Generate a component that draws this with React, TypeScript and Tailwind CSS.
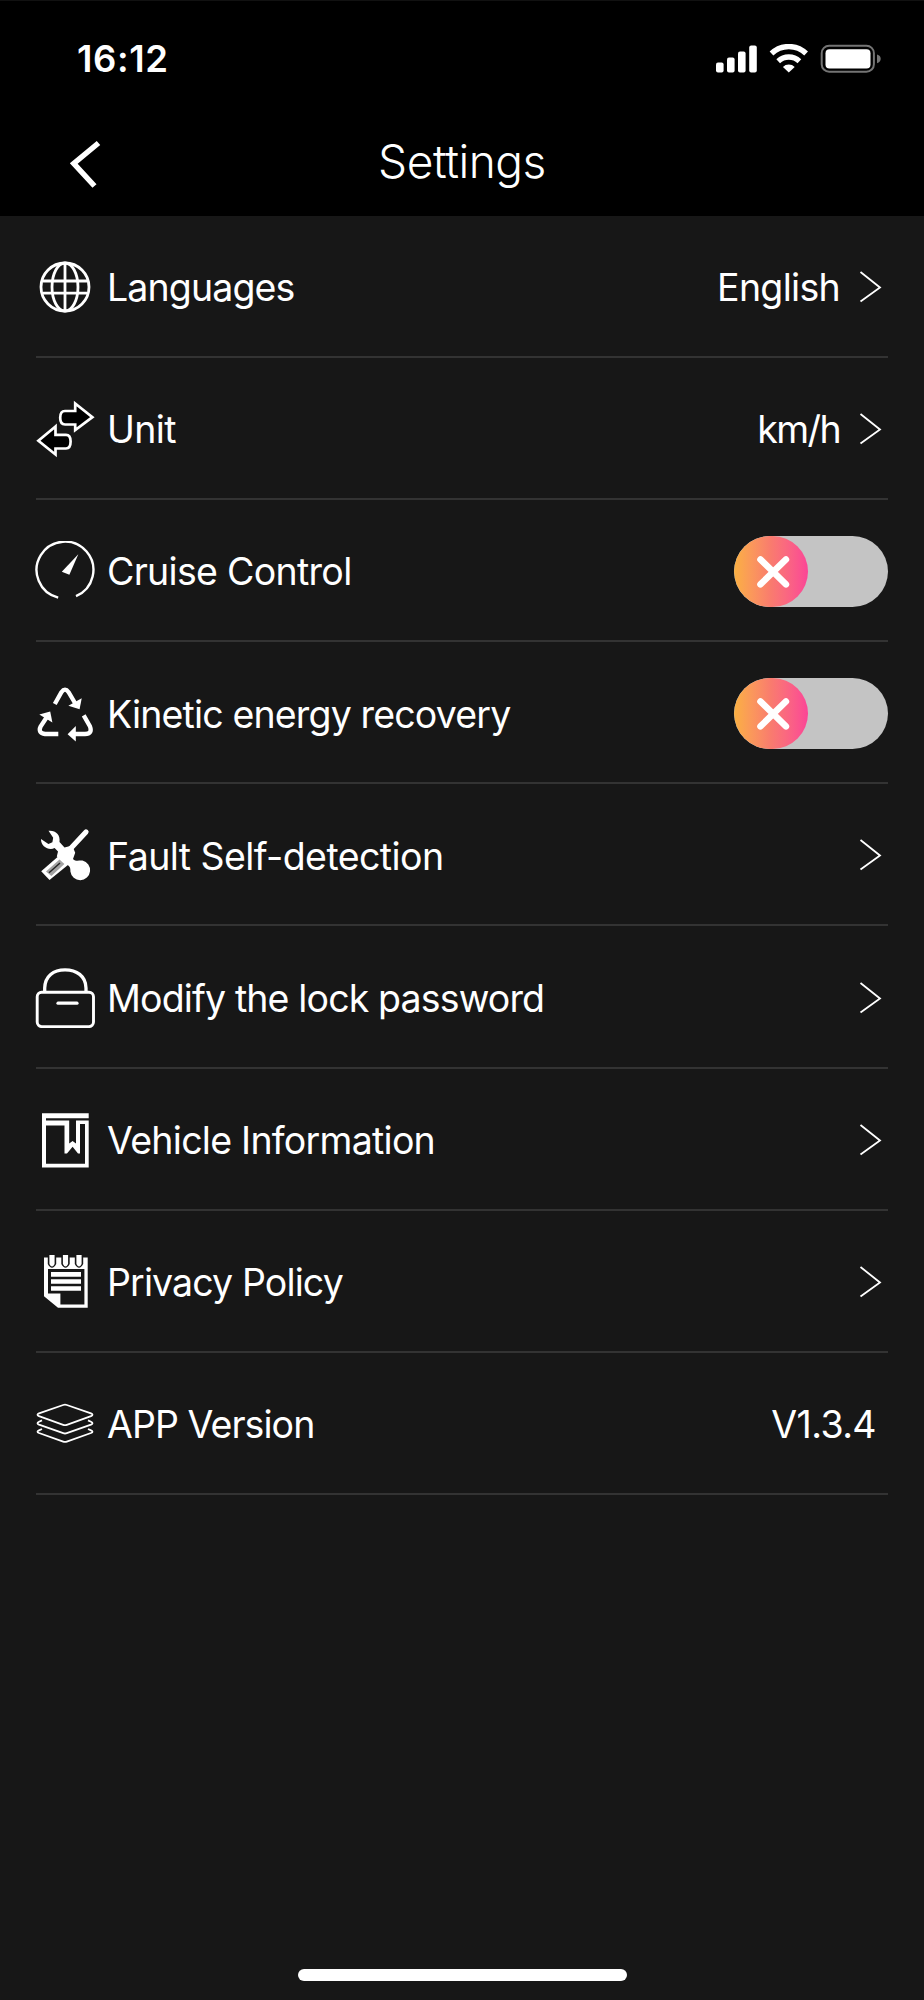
import { useState } from "react";
import type { ReactNode } from "react";

const GlobeIcon = () => (
  <svg viewBox="0 0 60 60" className="w-[60px] h-[60px]" fill="none" stroke="white" strokeWidth="2.8">
    <circle cx="30" cy="30" r="24" />
    <ellipse cx="30" cy="30" rx="13" ry="24" />
    <path d="M30 6v48M8 24h44M8 36.2h44" />
  </svg>
);

const UnitIcon = () => (
  <svg viewBox="0 0 60 60" className="w-[60px] h-[60px]" fill="black" stroke="white" strokeWidth="2.7">
    <path d="M40.2 4.5L57.4 18.2L40.2 31V25.5H30Q25.2 25.5 25.2 18.8Q25.2 12 30 12H40.2Z" />
    <path d="M20.5 27.5L3.4 41.8L20.5 55.5V49.5H31Q35.6 49.5 35.6 42.5Q35.6 35.8 31 35.8H20.5Z" />
  </svg>
);

const GaugeIcon = () => (
  <svg viewBox="0 0 60 60" className="w-[60px] h-[60px]">
    <path d="M23.2 56.6A28.4 28.4 0 1 1 41 55.2" fill="none" stroke="white" strokeWidth="2.4" />
    <path d="M43.3 13.2L34.4 33.8L26.8 30.7Z" fill="white" />
  </svg>
);

const RecycleIcon = () => (
  <svg viewBox="0 0 60 60" className="w-[60px] h-[60px]" fill="white">
    <g fill="none" stroke="white" strokeWidth="4.3">
      <path d="M19.8 21L26.4 9.2Q30 4.2 33.6 9.2L40 20" />
      <path d="M48.7 32.4L55 43.5Q57.8 50.8 50 51H40" />
      <path d="M23.3 51H10Q2.6 50 5.6 43.5L12.5 33" />
    </g>
    <path d="M46.7 15.3L44.6 26.2L33.4 22.8Z" />
    <path d="M40.8 43V58.5L32.6 51.2Z" />
    <path d="M4.3 31.4L15.2 28.6L17.4 39.4Z" />
  </svg>
);

const ToolsIcon = () => (
  <svg viewBox="0 0 60 60" className="w-[60px] h-[60px]">
    <path d="M51 7L31 28.5" stroke="white" strokeWidth="5.2" strokeLinecap="round" />
    <path d="M26 29L36 37.5L14.5 55L6.2 46.2Z" fill="white" />
    <path d="M24.5 34.4L29.4 39L16.4 51L11 46.4Z" fill="#a3a3a3" />
    <path d="M25 38L14 47.8" stroke="#262626" strokeWidth="1.5" />
    <path
      d="M13.5 5.8C20 5 25.6 9 24.5 17L29.5 22.4L37.2 20.6L40.2 27.8L38 34C41 37 44 35.2 47.5 35.6A9.9 9.9 0 1 1 35.4 46.5C35.6 42.4 34.6 41 31.2 39L21.8 31.6L23 26.6L19.6 23C14 26 5.6 21.5 6 14L13.4 19L17.4 17.2L18.2 12.8Z"
      fill="white"
    />
  </svg>
);

const LockIcon = () => (
  <svg viewBox="0 0 60 60" className="w-[60px] h-[60px]" fill="none" stroke="white">
    <path d="M9.7 23.5V20C10 8 18.5 1.8 30 1.8S50.8 8 51 20V23.5" strokeWidth="3.3" />
    <rect x="2.2" y="24.2" width="56.3" height="34.4" rx="4.5" strokeWidth="2.9" />
    <path d="M23 35.2H42" strokeWidth="3.2" strokeLinecap="round" />
  </svg>
);

const BookIcon = () => (
  <svg viewBox="0 0 60 60" className="w-[60px] h-[60px]" fill="white">
    <path d="M7 3.2H53.7V8.2H11V10.4H34.2V33.6L37.6 31L41 33.6V10.4H53.7V57.6H7ZM11 15.4V53.7H50V14H45V43.4H43L37.6 36.8L32 43.4H29.5V15.4Z" fillRule="evenodd" />
  </svg>
);

const NotepadIcon = () => (
  <svg viewBox="0 0 60 60" className="w-[60px] h-[60px]" fill="white">
    <path d="M9 5.4H52.7V55.8H23L9 44.2ZM13 17V41.4H25.4V52.6H49.4V17Z" fillRule="evenodd" />
    {[17, 30.5, 44].map((x) => (
      <g key={x}>
        <path d={`M${x - 4.2} 4.8V12Q${x} 19.5 ${x + 4.2} 12V4.8Z`} fill="#171717" />
        <path d={`M${x - 2.6} 3H${x + 2.6}V12Q${x} 17 ${x - 2.6} 12Z`} />
      </g>
    ))}
    <path d="M16 20H46V24.8H16ZM16 27.2H46V31.8H16ZM16 34.2H46V38.8H16Z" />
  </svg>
);

const LayersIcon = () => (
  <svg viewBox="0 0 60 60" className="w-[60px] h-[60px]" fill="none" stroke="white" strokeWidth="1.8" strokeLinejoin="round">
    <path d="M28.2 11Q30 10.4 31.8 11L56 19.4Q59 20.8 56 22.2L31.8 30.8Q30 31.4 28.2 30.8L4 22.2Q1 20.8 4 19.4Z" />
    <path d="M7 26.4L4 27.8Q1 29.2 4 30.6L28.2 39.2Q30 39.8 31.8 39.2L56 30.6Q59 29.2 56 27.8L53 26.4" />
    <path d="M7 35L4 36.4Q1 37.8 4 39L28.2 47.6Q30 48.2 31.8 47.6L56 39Q59 37.8 56 36.4L53 35" />
  </svg>
);

const StatusIcons = () => (
  <div className="flex items-center">
    <svg viewBox="0 0 42 30" className="w-[42px] h-[30px]" fill="white">
      <rect x="0" y="18.5" width="7.6" height="10" rx="2" />
      <rect x="11" y="13.5" width="7.6" height="15" rx="2" />
      <rect x="22" y="7.5" width="7.6" height="21" rx="2" />
      <rect x="33.2" y="1.5" width="7.6" height="27" rx="2" />
    </svg>
    <svg viewBox="0 0 40 30" className="ml-[11px] w-10 h-[30px]" fill="none" stroke="white" strokeWidth="5.4">
      <path d="M2.5 9.5A25 25 0 0 1 37.1 9.5" />
      <path d="M9.2 17.2A15.5 15.5 0 0 1 30.4 17.2" />
      <path d="M19.8 28.5L13.9 22.9A8.3 8.3 0 0 1 25.7 22.9Z" fill="white" stroke="none" />
    </svg>
    <svg viewBox="0 0 62 30" className="ml-[11px] w-[62px] h-[30px]">
      <rect x="1.7" y="1.7" width="52.2" height="26" rx="7.5" fill="none" stroke="#747474" strokeWidth="2" />
      <rect x="5.5" y="5.3" width="45" height="19.2" rx="4" fill="white" />
      <path d="M57 10.5Q60.7 11.5 60.7 14.8T57 19.2Z" fill="#747474" />
    </svg>
  </div>
);

const Chevron = () => (
  <svg viewBox="0 0 24 34" className="w-6 h-[34px]" fill="none" stroke="white" strokeWidth="1.8">
    <path d="M2.5 2L22 17.5L2.5 31.5" />
  </svg>
);

const Toggle = ({ label }: { label: string }) => {
  const [on, setOn] = useState(false);

  return (
    <button
      type="button"
      role="switch"
      aria-label={label}
      aria-checked={on}
      onClick={() => setOn(!on)}
      className={`flex h-[71px] w-[154px] overflow-hidden rounded-full bg-[#c4c4c4] ${on ? "justify-end" : "justify-start"}`}
    >
      <span className="flex h-[71px] w-[74px] items-center justify-center rounded-full bg-linear-to-r from-[#fbb040] via-[#f97b6e] to-[#fb4496]">
        <svg viewBox="0 0 34 34" className="ml-1 mt-0.5 w-[34px] h-[34px]" stroke="white" strokeWidth="6.4" strokeLinecap="round">
          <path d="M4.4 4.4L30 29.4M30 4.4L4.4 29.4" />
        </svg>
      </span>
    </button>
  );
};

type Row = {
  icon: () => ReactNode;
  label: string;
  tracking: string;
  value?: string;
  valueClass?: string;
  toggle?: boolean;
  chevron?: boolean;
};

const rows: Row[] = [
  { icon: GlobeIcon, label: "Languages", tracking: "tracking-[-0.87px]", value: "English", valueClass: "tracking-[-0.7px]", chevron: true },
  { icon: UnitIcon, label: "Unit", tracking: "tracking-[-0.6px]", value: "km/h", valueClass: "tracking-[-1.6px]", chevron: true },
  { icon: GaugeIcon, label: "Cruise Control", tracking: "tracking-[-0.7px]", toggle: true },
  { icon: RecycleIcon, label: "Kinetic energy recovery", tracking: "tracking-[-0.84px]", toggle: true },
  { icon: ToolsIcon, label: "Fault Self-detection", tracking: "tracking-[-0.57px]", chevron: true },
  { icon: LockIcon, label: "Modify the lock password", tracking: "tracking-[-0.86px]", chevron: true },
  { icon: BookIcon, label: "Vehicle Information", tracking: "tracking-[-0.74px]", chevron: true },
  { icon: NotepadIcon, label: "Privacy Policy", tracking: "tracking-[-0.88px]", chevron: true },
  { icon: LayersIcon, label: "APP Version", tracking: "tracking-[-0.95px]", value: "V1.3.4", valueClass: "mr-3 tracking-[-0.6px]" },
];

const App = () => {
  return (
    <div className="flex h-[2000px] w-[924px] flex-col bg-[#171717] font-['Inter',sans-serif] text-white">
      <header className="h-[216px] border-t border-[#111] bg-black">
        <div className="flex h-[116px] items-center justify-between pl-[77px] pr-[42px]">
          <span className="text-[36.5px] font-semibold leading-none tracking-[0.6px]">16:12</span>
          <StatusIcons />
        </div>
        <div className="grid h-[90px] grid-cols-[1fr_auto_1fr] items-center">
          <button type="button" aria-label="Back" className="ml-[68px] mt-[3px] w-9">
            <svg viewBox="0 0 36 50" className="w-9 h-[50px]" fill="none" stroke="white" strokeWidth="5.5">
              <path d="M30.5 4L5.8 24.5L26.5 47" />
            </svg>
          </button>
          <h1 className="-mt-0.5 text-[46px] font-light leading-none tracking-[-0.45px]">Settings</h1>
        </div>
      </header>

      <main className="px-9">
        {rows.map((row) => (
          <div key={row.label} className="flex h-[142.1px] items-center border-b-2 border-[#333] pt-0.5 text-[37.5px] leading-none">
            <span className="-ml-px">
              <row.icon />
            </span>
            <span className={`ml-3 mt-0.5 ${row.tracking}`}>{row.label}</span>
            <div className="ml-auto flex items-center">
              {row.value && <span className={`mt-0.5 ${row.valueClass}`}>{row.value}</span>}
              {row.toggle && <Toggle label={row.label} />}
              {row.chevron && (
                <span className="ml-[18px] mr-1.5">
                  <Chevron />
                </span>
              )}
            </div>
          </div>
        ))}
      </main>

      <div className="mx-auto mb-[19px] mt-auto h-3 w-[329px] rounded-full bg-white" />
    </div>
  );
};

export default App;
